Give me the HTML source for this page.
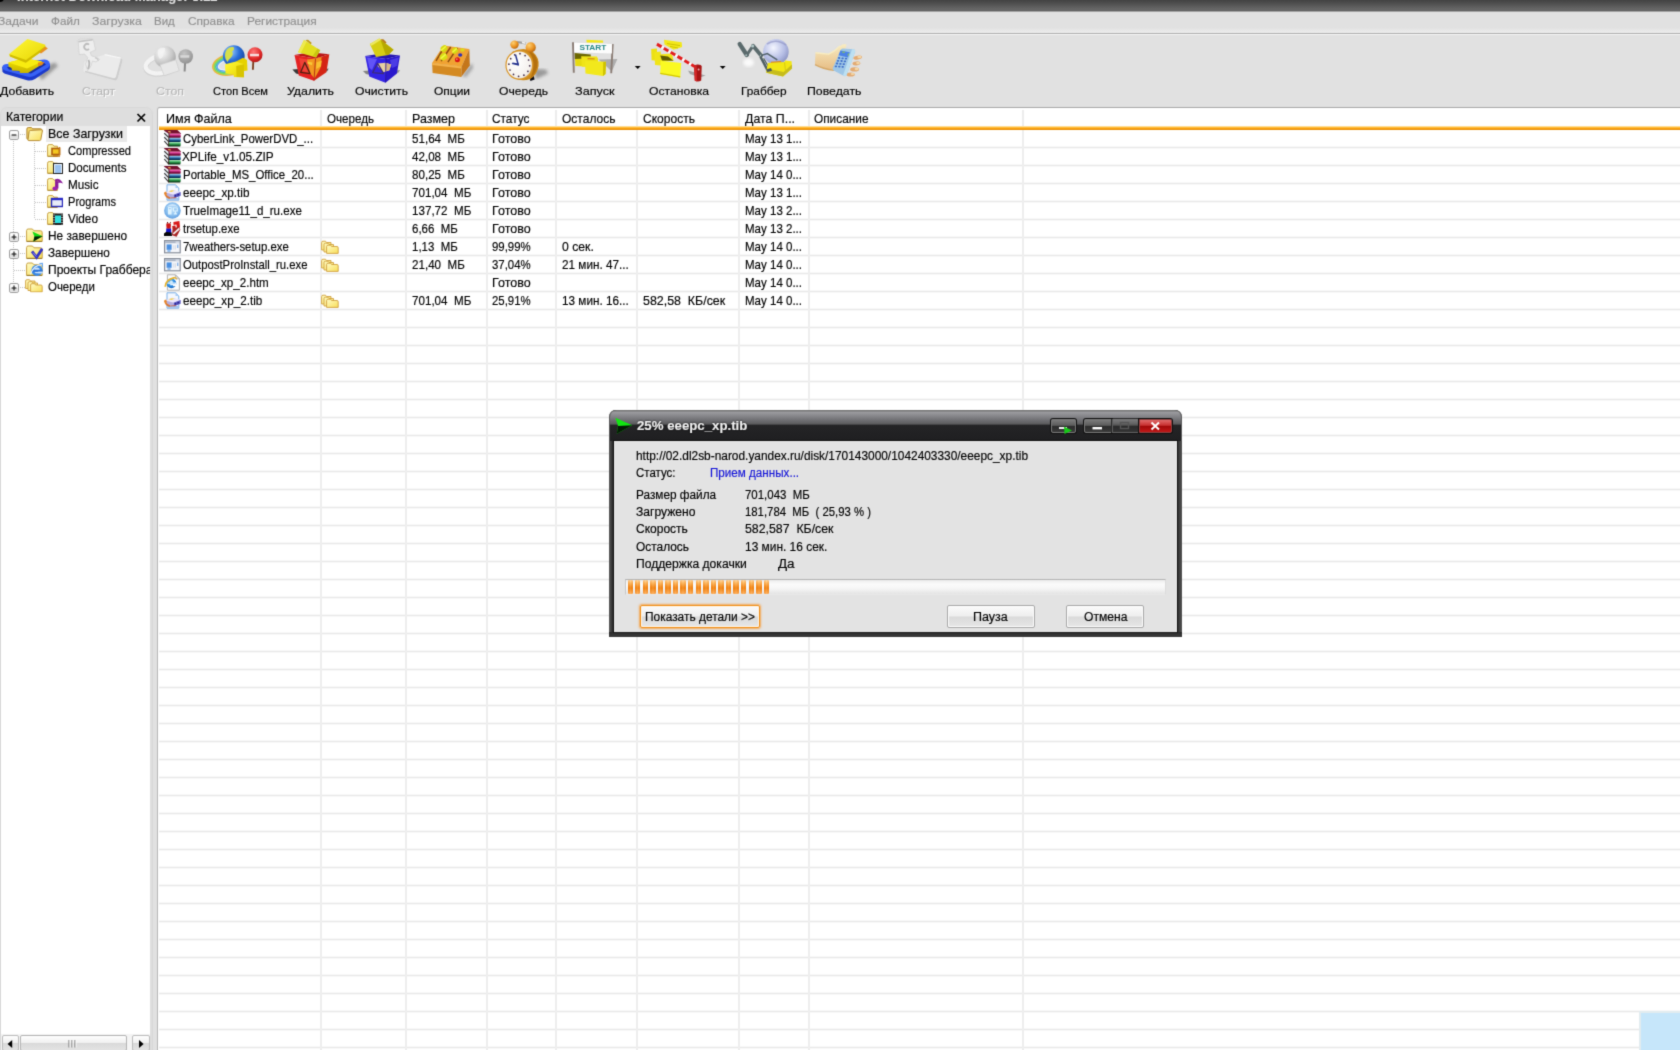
<!DOCTYPE html>
<html lang="ru">
<head>
<meta charset="utf-8">
<title>Internet Download Manager 5.12</title>
<style>
*{box-sizing:border-box;margin:0;padding:0}
html,body{width:1680px;height:1050px;overflow:hidden}
body{position:relative;background:#e1e1e1;font-family:"Liberation Sans",sans-serif;font-size:11px;color:#000;line-height:14px}
.a{position:absolute;white-space:nowrap}
.t{position:absolute;white-space:nowrap;height:14px;line-height:14px;transform-origin:0 0;-webkit-text-stroke:.16px currentColor}
/* title bar */
#tb{left:0;top:0;width:1680px;height:11px;background:linear-gradient(#424242 0,#4e4e4e 30%,#5e5e5e 65%,#686868 88%,#5c5c5c 100%);overflow:hidden;box-shadow:0 1px 0 #a4a4a4}

#tbcorner{left:-4px;top:-6px;width:8px;height:8px;border-radius:50%;background:#000}
#menu span{position:absolute;top:14px;color:#8c8c8c;line-height:14px}
#sep1{left:0;top:28px;width:1680px;height:6px;background:linear-gradient(#e2e2e2 0,#e9e9e9 3px,#eaeaea 4.6px,#b2b2b2 5px,#acacac 6px)}
#sep2{left:0;top:34px;width:1680px;height:1px;background:#f6f6f6}
/* toolbar */
.lbl{position:absolute;top:84px;height:14px;line-height:14px;text-align:center;white-space:nowrap}
.dis{color:#b4b4b4;text-shadow:1px 1px 0 #fff}
/* side */
#side{left:0;top:107px;width:153px;height:950px;background:#dedede;border-radius:7px 7px 0 0;border:1px solid #d8d8d8}
#tree{left:1px;top:126px;width:149px;height:908px;background:#fff}
#list{left:157px;top:107px;width:1530px;height:950px;background:#fff;border:1px solid #b8b8b8;border-top-color:#a8a8a8;border-radius:3px 0 0 0}
</style>
</head>
<body>
<svg width="0" height="0" style="position:absolute"><defs><filter id="soft" x="0" y="0" width="100%" height="100%" color-interpolation-filters="sRGB"><feConvolveMatrix order="3" kernelMatrix="0.0192 0.1001 0.0192 0.1001 0.5228 0.1001 0.0192 0.1001 0.0192" edgeMode="duplicate" preserveAlpha="false"/></filter></defs></svg>
<div id="root" class="a" style="left:0;top:0;width:1680px;height:1050px;overflow:hidden;will-change:transform;filter:url(#soft)">
<div class="a" id="tb"><span class="t" style="left:17.0px;top:-10.0px;font-size:13px;transform:scaleX(1.006);font-weight:bold;color:#dcdcdc;">Internet Download Manager 5.12</span></div>
<div class="a" id="tbcorner"></div>
<span class="t" style="left:-2.0px;top:14.0px;font-size:11.5px;transform:scaleX(1.049);color:#909090;">Задачи</span><span class="t" style="left:51.1px;top:14.0px;font-size:11.5px;transform:scaleX(1.018);color:#909090;">Файл</span><span class="t" style="left:91.9px;top:14.0px;font-size:11.5px;transform:scaleX(1.071);color:#909090;">Загрузка</span><span class="t" style="left:154.1px;top:14.0px;font-size:11.5px;transform:scaleX(0.999);color:#909090;">Вид</span><span class="t" style="left:187.5px;top:14.0px;font-size:11.5px;transform:scaleX(1.033);color:#909090;">Справка</span><span class="t" style="left:246.5px;top:14.0px;font-size:11.5px;transform:scaleX(1.035);color:#909090;">Регистрация</span>
<div class="a" id="sep1"></div><div class="a" id="sep2"></div>
<svg class="a" style="left:0;top:34px" width="900" height="52" viewBox="0 34 900 52">
<defs>
<linearGradient id="gy" x1="0" y1="0" x2="1" y2="1"><stop offset="0" stop-color="#fff838"/><stop offset="1" stop-color="#e6d400"/></linearGradient>
<linearGradient id="gyd" x1="0" y1="0" x2="0" y2="1"><stop offset="0" stop-color="#f4e400"/><stop offset="1" stop-color="#c8b400"/></linearGradient>
<linearGradient id="gblue" x1="0" y1="0" x2="0" y2="1"><stop offset="0" stop-color="#3a62f0"/><stop offset="1" stop-color="#1c36c0"/></linearGradient>
<radialGradient id="gsh"><stop offset="0" stop-color="#555" stop-opacity=".55"/><stop offset="1" stop-color="#888" stop-opacity="0"/></radialGradient>
<radialGradient id="gglobe" cx=".35" cy=".3" r=".8"><stop offset="0" stop-color="#9fd0ff"/><stop offset=".5" stop-color="#2a6fd8"/><stop offset="1" stop-color="#123a90"/></radialGradient>
<radialGradient id="ggray" cx=".35" cy=".3" r=".8"><stop offset="0" stop-color="#fafafa"/><stop offset=".6" stop-color="#c8c8c8"/><stop offset="1" stop-color="#9c9c9c"/></radialGradient>
<radialGradient id="gred" cx=".4" cy=".3" r=".8"><stop offset="0" stop-color="#ff7a7a"/><stop offset=".6" stop-color="#e02828"/><stop offset="1" stop-color="#a01010"/></radialGradient>
<radialGradient id="ggsign" cx=".4" cy=".3" r=".8"><stop offset="0" stop-color="#c4c4c4"/><stop offset="1" stop-color="#8c8c8c"/></radialGradient>
<linearGradient id="gredbin" x1="0" y1="0" x2="1" y2="1"><stop offset="0" stop-color="#ff4a30"/><stop offset=".5" stop-color="#f02818"/><stop offset="1" stop-color="#b00c0c"/></linearGradient>
<linearGradient id="gbluebin" x1="0" y1="0" x2="1" y2="1"><stop offset="0" stop-color="#4a40f0"/><stop offset=".5" stop-color="#3020d8"/><stop offset="1" stop-color="#1a0c98"/></linearGradient>
<radialGradient id="gbell" cx=".35" cy=".3" r=".8"><stop offset="0" stop-color="#ffd070"/><stop offset=".6" stop-color="#e89020"/><stop offset="1" stop-color="#a85808"/></radialGradient>
<radialGradient id="gface" cx=".4" cy=".4" r=".7"><stop offset="0" stop-color="#fff"/><stop offset=".8" stop-color="#f4f0ec"/><stop offset="1" stop-color="#d8c8b8"/></radialGradient>
<radialGradient id="gmesh" cx=".4" cy=".35" r=".75"><stop offset="0" stop-color="#f4f6ff"/><stop offset=".6" stop-color="#b4bce4"/><stop offset="1" stop-color="#8088b8"/></radialGradient>
<linearGradient id="gskin" x1="0" y1="0" x2="0" y2="1"><stop offset="0" stop-color="#f8ecc2"/><stop offset="1" stop-color="#e6bc84"/></linearGradient>
<linearGradient id="gphone" x1="0" y1="0" x2="1" y2="0"><stop offset="0" stop-color="#a8d0f0"/><stop offset="1" stop-color="#6c9cc8"/></linearGradient>
<clipPath id="cl3"><rect x="140" y="40" width="34" height="44"/></clipPath><clipPath id="cl4"><rect x="208" y="40" width="34" height="44"/></clipPath><filter id="b1"><feGaussianBlur stdDeviation="0.5"/></filter>
<filter id="b2"><feGaussianBlur stdDeviation="1.6"/></filter>
</defs>
<!-- 1 add -->
<g>
<path d="M34 70 L55 62.5 L58 66 L42 80 Z" fill="#555" opacity=".5" filter="url(#b2)"/>
<path d="M2.2 67 L2.5 71.5 Q3 73 5 73.8 L27 80.3 Q31 81.2 35 79 L48 70.5 Q50 69 50 67 L50 64 Z" fill="#1c3acc"/>
<path d="M2.2 67 Q2.5 65 5 64.3 L44 59.5 Q47.5 59.3 49 61.5 L50 64 Q50.3 66 48 67.5 L35 75.5 Q31 77.5 27 76.6 L5 70.5 Q2.2 69.5 2.2 67Z" fill="#3862f6"/>
<path d="M7 67 L43 62 L46 64.5 L31 73.5 L9 69.5Z" fill="#182ca0"/>
<path d="M8.3 62.5 L25 58.2 L42 61.5 L42.5 64 L28 73 L20 73 L19.5 71 L12 70.5 L11.5 68 L8.5 66.5Z" fill="url(#gyd)"/>
<path d="M8.3 62.5 L25 58.2 L42 61.5 L27 68.5Z" fill="#f8ec10"/>
<path d="M38 62.6 L44.5 62 L42 65.2 L38 66Z" fill="#e88a18"/>
<path d="M9.2 54 L27.5 39 L45.4 44.8 L45 49 L25.8 62.7 L10 56.5 Z" fill="url(#gy)"/>
<path d="M10 56.5 L25.8 62.7 L45 49 L45.3 46.3 L26 60 L9.4 54.2Z" fill="#d0bc00"/>
<path d="M45.3 46.6 L47.8 48.4 L41 53.6 L39.4 52.6Z" fill="#e89020"/>
</g>
<!-- 2 start (disabled) -->
<g filter="url(#b1)">
<path d="M84.7 61.5 L104.8 54.6 L120.6 58 Q123 58.8 122.4 61 L117.6 78.6 Q116.8 81 114.4 80.2 L85 72.2 Q83 71.4 83.4 69.6Z" fill="#ebebeb"/>
<path d="M120.6 58 Q123 58.8 122.4 61 L117.6 78.6 Q116.8 81 114.4 80.2 L85 72.2 L85.2 70.8 L113.6 78.2 Q115.4 78.6 116 76.8 L120.4 60.4Z" fill="#cdcdcd"/>
<path d="M104.8 54.6 L120.6 58" stroke="#f8f8f8" stroke-width="1.2"/>
<path d="M78.1 40.5 Q78.4 39.2 80 39.2 L91.6 38.9 Q93.2 38.9 93.5 40.4 L95.5 49.9 L90 52.4 L91.6 56 L96 57 L99.6 59.4 L96 62 L92.4 61 L91 66 L87.6 70.6 L85.6 64 L87.8 57.6 L84.6 54 L79.3 54.6Z" fill="#eeeeee" stroke="#cfcfcf" stroke-width=".7"/>
<path d="M78.4 41.6 L92.8 39.8" stroke="#c4c4c4" stroke-width="1.6"/>
<path d="M89 44.6 A2.9 2.9 0 1 0 89 49" fill="none" stroke="#bcbcbc" stroke-width="1.7"/>
<path d="M88.4 60 Q90.4 63.6 88 69" stroke="#b6b6b6" stroke-width="1.8" fill="none"/>
<path d="M95 57.6 Q98 58.4 98.4 60.6" stroke="#c8c8c8" stroke-width="1.2" fill="none"/>
</g>
<!-- 3 stop (disabled) -->
<g filter="url(#b1)">
<g clip-path="url(#cl3)"><ellipse cx="162" cy="65.2" rx="16.6" ry="8.8" fill="none" stroke="#d2d2d2" stroke-width="4.6" transform="rotate(-12 162 65.2)"/>
<ellipse cx="162" cy="64.2" rx="16.6" ry="8.8" fill="none" stroke="#f3f3f3" stroke-width="4.2" transform="rotate(-12 162 64.2)"/></g>
<circle cx="165" cy="56.9" r="10.8" fill="url(#ggray)"/>
<path d="M158 50 q3 -3 7 -2 q1 3 -2 5 q1 4 -3 6 q-3 -3 -2 -9z" fill="#f4f4f4" opacity=".8"/>
<path d="M160 64.8 L175.8 59.8 L179.2 70.7 L164.2 75.7Z" fill="#e8e8e8" stroke="#cccccc" stroke-width=".7"/>
<path d="M185.1 62 L184.6 71.5" stroke="#8a8a8a" stroke-width="2"/>
<circle cx="185.7" cy="56.5" r="7.3" fill="url(#ggsign)"/>
<rect x="180.3" y="55.2" width="9" height="2.5" fill="#d8d8d8"/>
</g>
<!-- 4 stop all -->
<g>
<g clip-path="url(#cl4)"><g transform="rotate(-12 230.8 64.4)" fill="none">
<ellipse cx="230.8" cy="64.4" rx="18.2" ry="10.4" stroke="#f2b43a" stroke-width="1.6"/>
<ellipse cx="230.8" cy="64.4" rx="16.8" ry="9" stroke="#8ed84e" stroke-width="1.7"/>
<ellipse cx="230.8" cy="64.4" rx="15.3" ry="7.6" stroke="#4ec8a0" stroke-width="1.6"/>
<ellipse cx="230.8" cy="64.4" rx="13.9" ry="6.3" stroke="#5aa2f2" stroke-width="1.5"/>
<ellipse cx="230.8" cy="64.4" rx="12.7" ry="5.2" stroke="#eef4f8" stroke-width="1"/>
</g></g>
<circle cx="233.75" cy="56.1" r="10.9" fill="url(#gglobe)"/>
<path d="M226.5 50 q2.5 -3.5 7 -3 q1.5 2.5 -1.5 4.5 q2 3 -1.5 6.5 q-2 1.5 -3 4 q-2.5 -2.5 -2.5 -6 q0 -3.5 1.5 -6z" fill="#d6e04a"/>
<path d="M236 61.5 L243 57.8 L247 60 L247.5 70.5 L240 71.5Z" fill="#e6d200"/>
<path d="M225 64.2 L236 61.5 L243.5 64 L244 77.3 L234 77 L233.5 74.5 L225.5 73.5Z" fill="url(#gy)"/>
<path d="M236.2 66 L244 64.2 L244 77.3 L236.5 77Z" fill="#d8c400"/>
<path d="M253.3 61 L252.9 69.8" stroke="#7a3a1a" stroke-width="1.8"/>
<circle cx="255" cy="54.8" r="7.5" fill="url(#gred)"/>
<rect x="250" y="53.8" width="9" height="2.5" fill="#f6dede"/>
</g>
<!-- 5 delete -->
<g>
<path d="M292.4 69.5 L299 69 L300 74.5 L296 73.5Z" fill="#000" opacity=".75" filter="url(#b1)"/>
<path d="M325.6 69 L328.6 68.6 L327.4 71 L325.6 71.8Z" fill="#000" opacity=".6" filter="url(#b1)"/>
<path d="M294.5 55 L309.8 52.2 L329.3 54.3 L315.5 58.4Z" fill="#b81414"/>
<path d="M294.5 55 L315.5 58.4 L314 80.8 L298.8 75.5Z" fill="#e42222"/>
<path d="M299 58 L313 60.4 L312.4 74 L301.6 70.8Z" fill="#f24a3c" opacity=".8"/>
<path d="M315.5 58.4 L329.3 54.3 L326.4 72.2 L314 80.8Z" fill="#d42414"/>
<path d="M307 59.4 L315.5 58.4 L321.6 57 L320.4 68 L314.6 78.6 L310.4 73.4Z" fill="#f2a020" opacity=".92"/>
<path d="M316.4 62.4 L321.8 60.6 L321 66.4 L316 69Z" fill="#f8c030"/>
<path d="M307.4 61.4 L312.4 62.6 L312 65.2 L307.6 63.8Z" fill="#f8c838"/>
<path d="M315.5 58.6 L314 80.6" stroke="#a81a10" stroke-width=".8"/>
<path d="M300.6 72.4 L304.8 62.4 L310 73.6Z" fill="none" stroke="#4e2210" stroke-width="1.3" stroke-linejoin="round"/>
<path d="M298 52.2 L304 40 L320.2 50.3 L316 57.4 Z" fill="#e2de20"/>
<path d="M298 52.2 L304 40 L306.6 41.8 L300.6 53.2Z" fill="#eeea50"/>
<path d="M313 55.6 L317.6 48.6 L320.2 50.3 L316 57.4Z" fill="#c8c410"/>
<path d="M305.4 40 L308 39.8 L311.8 43 L310.6 44.2Z" fill="#c09a10"/>
</g>
<!-- 6 clean -->
<g>
<path d="M363 71 L369.4 70.6 L370.4 75 L366 74Z" fill="#444" opacity=".6" filter="url(#b1)"/>
<path d="M396.4 70.4 L400 70 L398.6 72.6 L396.4 73.4Z" fill="#444" opacity=".5" filter="url(#b1)"/>
<path d="M365.2 56 L381.7 53.6 L400 55.5 L386 58.9Z" fill="#2414b0"/>
<path d="M365.2 56 L386 58.9 L385.5 82.7 L369.3 76.5Z" fill="#3424e4"/>
<path d="M367 57.6 L377 59 L372 70 L369.4 68Z" fill="#6e60fa" opacity=".8"/>
<path d="M386 58.9 L400 55.5 L396.9 73.6 L385.5 82.7Z" fill="#2a18cc"/>
<path d="M390 60 L398.6 57.6 L397 66 L392 68Z" fill="#5a4cf0" opacity=".7"/>
<path d="M377.4 63.6 L385.5 62.7 L391.2 64.6 L389.3 70.3 L383.6 72.2 L377.9 66.5Z" fill="#e8d2a2"/>
<path d="M385.5 62.7 L391.2 64.6 L389.3 70.3 L385.4 71.4Z" fill="#d8b888"/>
<path d="M372.6 72.6 L377.6 63.4 L383.6 73.6Z" fill="none" stroke="#3c2c78" stroke-width="1.2" stroke-linejoin="round"/>
<path d="M386 59 L385.5 82.4" stroke="#1c0c98" stroke-width=".8"/>
<path d="M369.8 44.1 L379.3 38.4 L393.6 49.8 L388.3 55 L376 57Z" fill="#d6ce14"/>
<path d="M380.4 39.6 L393.6 49.8 L388.3 55 L385.6 54.6Z" fill="#b6aa00"/>
<path d="M369.8 44.1 L379.3 38.4 L381 39.8 L371.6 45.8Z" fill="#ece860"/>
<path d="M380.6 39.2 L383.4 39.2 L386.6 42.4 L385 43.6Z" fill="#b87a18"/>
</g>
<!-- 7 options -->
<g>
<path d="M462 76 L472 63 L473 68 L466 77Z" fill="#555" opacity=".45" filter="url(#b2)"/>
<path d="M432.1 63.1 L443.6 45.5 L469.3 48.9 L461.7 66.5Z" fill="#f0a232"/>
<path d="M432.1 63.1 L461.7 66.5 L461.2 77 L432.6 73.1Z" fill="#d48a22"/>
<path d="M432.1 63.1 L461.7 66.5 L461.6 68.5 L432.2 65Z" fill="#f4b24a"/>
<path d="M461.7 66.5 L469.3 48.9 L469.8 65.5 L461.2 77Z" fill="#c4761a"/>
<path d="M436 60.8 L444 47.4 M441.2 61.2 L450.7 47 M447.9 62.2 L457.4 47.9" stroke="#8a4c0c" stroke-width="1.5"/>
<rect x="440.6" y="45.6" width="6.8" height="6" rx="2.4" fill="#d6da10" transform="rotate(-32 444 48.6)"/>
<rect x="440" y="53.4" width="7.2" height="6.6" rx="2.6" fill="#dade14" transform="rotate(-32 443.6 56.7)"/>
<rect x="451.8" y="47.6" width="6.2" height="5.8" rx="2.3" fill="#d6da10" transform="rotate(-32 455 50.5)"/>
<path d="M441.4 50.2 L445.4 46.8 M441 58.4 L445.4 54.6 M452.8 52 L456.4 48.8" stroke="#f4f848" stroke-width="1.4" stroke-linecap="round"/>
<ellipse cx="462.4" cy="50" rx="2.3" ry="1.8" fill="#dcd81c"/>
<ellipse cx="460.2" cy="55" rx="2.1" ry="1.7" fill="#3232b4"/>
<circle cx="457.4" cy="59.8" r="2.5" fill="#d81414"/><circle cx="456.8" cy="59.2" r=".9" fill="#f87a6a"/>
</g>
<!-- 8 queue (clock) -->
<g>
<path d="M534 69 L546 69.5 L548 73.5 L536 79Z" fill="#444" opacity=".45" filter="url(#b2)"/>
<path d="M529.3 76 L533.4 74.6 L534.6 79.6 L530.4 81Z" fill="#0c0c14"/>
<path d="M517 42 L526 43.4" stroke="#9a9a9a" stroke-width="2.2"/><path d="M522 42.4 L525.6 43.2" stroke="#f4f4f4" stroke-width="1.6"/>
<path d="M512 52 Q524 46 533 52 Q539.5 58 538.6 66 Q537 75 530.2 79 Q522 82 514 78Z" fill="#cc8a1c"/>
<path d="M527 50 Q536 53 537.6 62 Q537.6 72 530.4 78.4 Q534 70 533.4 62 Q532 54 527 50Z" fill="#b4700e"/>
<circle cx="514.5" cy="44.6" r="4.2" fill="url(#gbell)"/>
<circle cx="530.7" cy="47.4" r="5.1" fill="url(#gbell)"/>
<ellipse cx="519.3" cy="65" rx="13.9" ry="14.7" fill="#d8962a"/>
<ellipse cx="519.3" cy="65" rx="12.7" ry="13.6" fill="url(#gface)"/>
<g fill="#3c2440"><circle cx="520.0" cy="53.7" r=".85"/><circle cx="525.1" cy="55.6" r=".85"/><circle cx="528.6" cy="60.0" r=".85"/><circle cx="529.7" cy="65.8" r=".85"/><circle cx="527.9" cy="71.3" r=".85"/><circle cx="523.9" cy="75.2" r=".85"/><circle cx="518.6" cy="76.3" r=".85"/><circle cx="513.5" cy="74.4" r=".85"/><circle cx="510.0" cy="70.0" r=".85"/><circle cx="508.9" cy="64.2" r=".85"/><circle cx="510.7" cy="58.7" r=".85"/><circle cx="514.7" cy="54.8" r=".85"/></g>
<path d="M518.3 65 L515.5 54.6" stroke="#22308c" stroke-width="1.5"/>
<path d="M519 65.8 L511.7 64.1 L512.6 62.4 L518.6 63.6Z" fill="#22308c"/>
</g>
<!-- 9 start queue -->
<g>
<path d="M598.3 59.5 L617.4 58.9 L611.7 71.5 L606 66Z" fill="#666" opacity=".42" filter="url(#b1)"/>
<path d="M586.4 39.8 L603 40.4 L603.2 42.8 L586.6 42.4Z" fill="#f2e618"/>
<path d="M573 42.2 L573.8 72.8" stroke="#8a7c74" stroke-width="1.9"/>
<path d="M612.7 44 L611.2 73.2" stroke="#8a7c74" stroke-width="1.9"/>
<path d="M574 42.7 L612.1 44.1 L611.9 53.6 L574.3 52.2Z" fill="#fcfcfc"/>
<text x="592.9" y="50.3" font-family="Liberation Sans,sans-serif" font-weight="bold" font-size="6.6" fill="#2a8a8a" text-anchor="middle" textLength="27" lengthAdjust="spacingAndGlyphs">START</text>
<path d="M574.6 53 L590.8 54.4 L590.6 59.4 L574.8 59Z" fill="#6c6600"/>
<path d="M575 58.9 L586 58.6 L586.4 66.6 L575.4 66Z" fill="#e6da10"/>
<path d="M581.2 56.2 L597 56.6 L598.3 66.5 L581.8 66.8Z" fill="#f0e418"/>
<path d="M586.9 57.4 L597.9 57.8 L598 61.4 L586.9 61Z" fill="#ece018"/>
<path d="M587.6 58 L594.6 58.3 L594.6 59.5 L587.6 59.2Z" fill="#d88a14"/>
<path d="M585 60.8 L606 61.7 L605.5 74.1 L603 76 L585.5 73.6Z" fill="#f2e81c"/>
<path d="M603.2 62 L606 61.7 L605.5 74.1 L603 76Z" fill="#cec200"/>
</g>
<path d="M634.8 66 L640.6 66 L637.7 69Z" fill="#000"/>
<!-- 10 stop queue -->
<g>
<path d="M688 70.5 L705.5 75.5 L700 77.5 L690 74Z" fill="#666" opacity=".5" filter="url(#b1)"/>
<path d="M664 39.8 L681.7 42.2 L682.1 47 L673.6 49.8 L664.5 44.6Z" fill="#f2e81a"/>
<path d="M667 43.6 L680 45.6 M670 46.4 L678 48" stroke="#c8bc00" stroke-width=".9"/>
<path d="M651.2 49 L656.9 48.6 L657.2 60.8 L651.6 60.2Z" fill="#ece014"/>
<path d="M654.5 52.2 L660.7 51.6 L661 65.5 L655 65Z" fill="#f0e418"/>
<path d="M658 54.6 L672 53.6 L673.6 60.8 L660.4 61.4Z" fill="#f0e418"/>
<path d="M660.2 55.6 L668 56.6 L673.6 60.8 L662 60.4Z" fill="#5e5a00"/>
<path d="M660.7 60.8 L681.2 63.1 L680.2 77.4 L660.2 74.1Z" fill="#fafa22"/>
<path d="M660.2 74.1 L680.2 77.4 L680.3 76.2 L660.3 72.8Z" fill="#d2c600"/>
<path d="M656.9 44.1 L694.5 66.5" stroke="#fafafa" stroke-width="3"/>
<path d="M656.9 44.1 L694.5 66.5" stroke="#e01c1c" stroke-width="3" stroke-dasharray="5.4 2.6"/>
<path d="M694 66 Q694.4 64.4 697.8 64.5 Q701.5 64.8 701.7 66.4 L701.2 80.6 Q698 82.4 694.8 80.8Z" fill="#a81414"/>
<path d="M694 66 L696.6 65 L697 81.4 L694.8 80.8Z" fill="#d42828"/>
<circle cx="698.6" cy="69.4" r="1" fill="#e8b0b0"/>
</g>
<path d="M719.8 66 L725.6 66 L722.7 69Z" fill="#000"/>
<!-- 11 grabber -->
<g>
<ellipse cx="748.6" cy="62.6" rx="5.4" ry="4" fill="#fff" opacity=".85" filter="url(#b2)"/>
<circle cx="775.9" cy="51.7" r="12.8" fill="url(#gmesh)"/>
<path d="M767 44 Q776 38 786 45" fill="none" stroke="#8a90c0" stroke-width="1.6" opacity=".6"/>
<path d="M739.7 44.1 L746.8 55" stroke="#5a6a6c" stroke-width="4.3" stroke-linecap="round"/>
<path d="M746.8 55 L753 45.8" stroke="#5a6a6c" stroke-width="3" stroke-linecap="round"/>
<path d="M753 45.8 L761.1 55.5" stroke="#5a6a6c" stroke-width="3.8" stroke-linecap="round"/>
<circle cx="752.6" cy="46" r="1.5" fill="#b4caca"/><circle cx="746.2" cy="55.2" r="1" fill="#a8bcbc"/><circle cx="761" cy="55.4" r="1" fill="#a8bcbc"/>
<path d="M761.1 55.5 L767.3 53.6 L777.3 59.8" fill="none" stroke="#52626a" stroke-width="1.5"/>
<path d="M760.4 56.6 L767.6 70.4 L771.4 69.4" fill="none" stroke="#4e5e62" stroke-width="2.4" stroke-linejoin="round"/>
<path d="M763.6 58.4 L769.6 68.6" stroke="#4e5e62" stroke-width="1.2"/>
<path d="M771 61.8 L781 61 L781.4 62.6 L771 63.4Z" fill="#e08a18"/>
<path d="M767.8 63.1 L784.6 62 L785 60.6 L791.6 61.2 L792 68.4 L783 76.5 L766.3 72.7Z" fill="#f2e614"/>
<path d="M766.8 68.5 L783.6 72 L792 64.6 L792 68.4 L783 76.5 L766.3 72.7Z" fill="#c6bc1c"/>
<path d="M784.6 62.4 L785.4 70.4" stroke="#d6ca10" stroke-width="1"/>
<path d="M766.4 69.6 L771 68 L772 70.8 L767.2 72Z" fill="#46565a"/>
</g>
<!-- 12 tell a friend -->
<g>
<path d="M815.5 52.7 Q822 53.6 828.8 54.1 Q836 50.5 840 46 Q843.6 42.8 846.6 44.6 L845 50 L840 60 L834 70.4 Q823 69 815 64.6Z" fill="url(#gskin)"/>
<path d="M815.5 52.7 Q822 53.6 828.8 54.1 Q836 50.5 840 46" fill="none" stroke="#f8ecc0" stroke-width="1.4"/>
<path d="M815 64.6 Q823 69 834 70.4" fill="none" stroke="#d4a868" stroke-width="1.2"/>
<g fill="#e2aa72"><ellipse cx="857.6" cy="57.6" rx="4.4" ry="2" transform="rotate(-10 857.6 57.6)"/><ellipse cx="856.4" cy="63.4" rx="4" ry="2" transform="rotate(-6 856.4 63.4)"/><ellipse cx="854.6" cy="69.4" rx="4.4" ry="2.1"/><ellipse cx="850.6" cy="74.4" rx="4.2" ry="2"/></g>
<g fill="#f4d6a4"><ellipse cx="859.4" cy="57" rx="2" ry="1.2"/><ellipse cx="858" cy="63" rx="1.8" ry="1.2"/><ellipse cx="856.6" cy="69" rx="2" ry="1.2"/><ellipse cx="852.6" cy="74" rx="1.9" ry="1.1"/></g>
<path d="M840.7 50 Q841.2 48.4 843 48.5 L853.6 49.2 Q855.6 49.6 855.2 51.6 L846.6 75 Q845.6 76.8 843.6 75.8 L833.6 70.6 Q832 69.6 832.8 67.8Z" fill="#9ec6e6"/>
<path d="M852 49.2 L853.6 49.2 Q855.6 49.6 855.2 51.6 L846.6 75 Q845.6 76.8 843.6 75.8 L843 75.4Z" fill="#bce0f2"/>
<path d="M840.4 50.6 L849.8 52.2 L847.9 57.4 L838.6 55.2Z" fill="#4c82e6"/>
<path d="M842.4 51.4 L845 51.8 L844.6 53 L842 52.6Z M848 53.4 L849.2 53.6 L848.6 55.6 L847.4 55.4Z" fill="#86c45a"/>
<g fill="#3c6cc8"><ellipse cx="839.1" cy="58.0" rx="1.2" ry=".9" transform="rotate(8 839.1 58.0)"/><ellipse cx="842.6" cy="58.3" rx="1.2" ry=".9" transform="rotate(8 842.6 58.3)"/><ellipse cx="846.0" cy="58.6" rx="1.2" ry=".9" transform="rotate(8 846.0 58.6)"/><ellipse cx="838.0" cy="60.8" rx="1.2" ry=".9" transform="rotate(8 838.0 60.8)"/><ellipse cx="841.5" cy="61.0" rx="1.2" ry=".9" transform="rotate(8 841.5 61.0)"/><ellipse cx="844.9" cy="61.3" rx="1.2" ry=".9" transform="rotate(8 844.9 61.3)"/><ellipse cx="837.0" cy="63.5" rx="1.2" ry=".9" transform="rotate(8 837.0 63.5)"/><ellipse cx="840.4" cy="63.8" rx="1.2" ry=".9" transform="rotate(8 840.4 63.8)"/><ellipse cx="843.8" cy="64.1" rx="1.2" ry=".9" transform="rotate(8 843.8 64.1)"/><ellipse cx="835.9" cy="66.3" rx="1.2" ry=".9" transform="rotate(8 835.9 66.3)"/><ellipse cx="839.3" cy="66.6" rx="1.2" ry=".9" transform="rotate(8 839.3 66.6)"/><ellipse cx="842.7" cy="66.8" rx="1.2" ry=".9" transform="rotate(8 842.7 66.8)"/></g>
</g>
</svg>
<span class="t" style="left:-0.5px;top:84.0px;font-size:11.6px;transform:scaleX(1.054);">Добавить</span><span class="t" style="left:81.5px;top:84.0px;font-size:11.6px;transform:scaleX(1.047);color:#b6b6b6;text-shadow:1px 1px 0 #fff;">Старт</span><span class="t" style="left:155.5px;top:84.0px;font-size:11.6px;transform:scaleX(1.065);color:#b6b6b6;text-shadow:1px 1px 0 #fff;">Стоп</span><span class="t" style="left:212.5px;top:84.0px;font-size:11.6px;transform:scaleX(0.957);">Стоп Всем</span><span class="t" style="left:287.0px;top:84.0px;font-size:11.6px;transform:scaleX(1.062);">Удалить</span><span class="t" style="left:355.0px;top:84.0px;font-size:11.6px;transform:scaleX(1.050);">Очистить</span><span class="t" style="left:434.0px;top:84.0px;font-size:11.6px;transform:scaleX(1.032);">Опции</span><span class="t" style="left:498.5px;top:84.0px;font-size:11.6px;transform:scaleX(1.044);">Очередь</span><span class="t" style="left:574.5px;top:84.0px;font-size:11.6px;transform:scaleX(1.089);">Запуск</span><span class="t" style="left:649.0px;top:84.0px;font-size:11.6px;transform:scaleX(1.048);">Остановка</span><span class="t" style="left:741.0px;top:84.0px;font-size:11.6px;transform:scaleX(1.021);">Граббер</span><span class="t" style="left:807.0px;top:84.0px;font-size:11.6px;transform:scaleX(1.062);">Поведать</span>
<div class="a" id="side"></div>
<div class="a" id="tree"></div>
<span class="t" style="left:6.2px;top:110.4px;font-size:12.8px;transform:scaleX(0.954);">Категории</span><svg class="a" style="left:136px;top:112px" width="11" height="11" viewBox="0 0 11 11"><path d="M1.5 2 L9 9.5 M9 2 L1.5 9.5" stroke="#000" stroke-width="1.7"/></svg><div class="a" style="left:46px;top:126px;width:81px;height:16px;background:#e9e9e9"></div><svg class="a" style="left:0;top:126px" width="150" height="175" viewBox="0 126 150 175" shape-rendering="crispEdges"><g stroke="#c2c2c2" stroke-width="1" stroke-dasharray="1 1" fill="none"><path d="M13.5 139 V287"/><path d="M34.5 143 V219"/><path d="M35 151.5 H46"/><path d="M35 168.5 H46"/><path d="M35 185.5 H46"/><path d="M35 202.5 H46"/><path d="M35 219.5 H46"/><path d="M14 134.5 H26"/><path d="M14 236.5 H26"/><path d="M14 253.5 H26"/><path d="M14 270.5 H26"/><path d="M14 287.5 H26"/></g></svg><svg class="a" style="left:9px;top:130px" width="10" height="10" viewBox="0 0 10 10"><rect x=".5" y=".5" width="9" height="9" rx="1.6" fill="#fcfcfc" stroke="#9c9c9c"/><rect x="1.4" y="5" width="7.2" height="3.6" fill="#dedede"/><path d="M2.6 5 H7.4" stroke="#222" stroke-width="1.2"/></svg><svg class="a" style="left:9px;top:231.5px" width="10" height="10" viewBox="0 0 10 10"><rect x=".5" y=".5" width="9" height="9" rx="1.6" fill="#fcfcfc" stroke="#9c9c9c"/><rect x="1.4" y="5" width="7.2" height="3.6" fill="#dedede"/><path d="M2.6 5 H7.4" stroke="#222" stroke-width="1.2"/><path d="M5 2.6 V7.4" stroke="#222" stroke-width="1.2"/></svg><svg class="a" style="left:9px;top:248.5px" width="10" height="10" viewBox="0 0 10 10"><rect x=".5" y=".5" width="9" height="9" rx="1.6" fill="#fcfcfc" stroke="#9c9c9c"/><rect x="1.4" y="5" width="7.2" height="3.6" fill="#dedede"/><path d="M2.6 5 H7.4" stroke="#222" stroke-width="1.2"/><path d="M5 2.6 V7.4" stroke="#222" stroke-width="1.2"/></svg><svg class="a" style="left:9px;top:282.5px" width="10" height="10" viewBox="0 0 10 10"><rect x=".5" y=".5" width="9" height="9" rx="1.6" fill="#fcfcfc" stroke="#9c9c9c"/><rect x="1.4" y="5" width="7.2" height="3.6" fill="#dedede"/><path d="M2.6 5 H7.4" stroke="#222" stroke-width="1.2"/><path d="M5 2.6 V7.4" stroke="#222" stroke-width="1.2"/></svg><svg width="0" height="0" style="position:absolute"><defs>
<linearGradient id="fy" x1="0" y1="0" x2="1" y2="1"><stop offset="0" stop-color="#fffcc8"/><stop offset="1" stop-color="#f8de58"/></linearGradient>
<symbol id="fold" viewBox="0 0 16 16"><path d="M.6 4.2 Q.6 2.6 2.2 2.6 H5.6 L7 4.2 H10.4 V14.2 H.6Z" fill="url(#fy)" stroke="#c8a040" stroke-width="1"/><path d="M.6 14.4 H10.4" stroke="#a88430" stroke-width=".8"/></symbol>
<symbol id="foldw" viewBox="0 0 17 16"><path d="M.6 3.6 Q.6 2 2.2 2 H6.4 L8 3.8 H14.6 Q16.2 3.8 16.2 5.4 V14.2 H.6Z" fill="url(#fy)" stroke="#c8a040" stroke-width="1"/><path d="M.6 14.5 H16.2" stroke="#9c7c2c" stroke-width="1"/></symbol>
<symbol id="foldbig" viewBox="0 0 17 16"><path d="M.9 3 Q.9 1.6 2.2 1.6 H5.4 L6.8 2.8 H14.6 Q15.8 2.8 15.8 4 V6 H3.4 L2 13.6 L.9 12.4Z" fill="#f4d868" stroke="#b08430" stroke-width="1"/><path d="M3.2 5.4 Q3.4 4.4 4.6 4.4 L16 3.8 Q16.6 3.8 16.4 4.8 L14.8 13.6 Q14.6 14.6 13.4 14.6 H3 Q1.8 14.6 2 13.6Z" fill="url(#fy)" stroke="#b88c34" stroke-width="1"/></symbol>
<symbol id="qfold" viewBox="0 0 18 14"><g fill="url(#fy)" stroke="#d0a040" stroke-width=".9"><path d="M.6 2.5 Q.6 1.2 2 1.2 H4.5 L5.5 2.5 H10 V10 H.6Z"/><path d="M3 4.5 Q3 3.2 4.4 3.2 H7 L8 4.5 H12.5 V12 H3Z"/><path d="M5.6 6.5 Q5.6 5.2 7 5.2 H9.6 L10.6 6.5 H16 Q17.2 6.5 17.2 7.8 V13.4 H5.6Z"/></g></symbol>
</defs></svg><svg class="a" style="left:26px;top:126px" width="17" height="16"><use href="#foldbig"/></svg><svg class="a" style="left:47px;top:142px" width="16" height="16" viewBox="0 0 16 16"><use href="#fold"/><rect x="5" y="6.5" width="7.5" height="6" fill="#f4c820" stroke="#b06010" stroke-width="1.6"/><path d="M12.5 5 V13 M6 14 H13" stroke="#c07818" stroke-width="1.4"/></svg><svg class="a" style="left:47px;top:159px" width="16" height="16" viewBox="0 0 16 16"><use href="#fold"/><rect x="6.5" y="4.5" width="9" height="10" fill="#eaf4ff" stroke="#222" stroke-width="1"/><path d="M8 7 H14 M8 9 H14 M8 11 H14 M8 13 H14" stroke="#4a90e0" stroke-width="1"/></svg><svg class="a" style="left:47px;top:176px" width="16" height="16" viewBox="0 0 16 16"><use href="#fold"/><path d="M9 12 V4 Q12 3 14 6 Q12 5.5 10.5 6 V12.5" fill="none" stroke="#8a1a9a" stroke-width="1.8"/><ellipse cx="8" cy="12.5" rx="2.6" ry="2" fill="#a020b0"/></svg><svg class="a" style="left:47px;top:193px" width="16" height="16" viewBox="0 0 16 16"><use href="#fold"/><rect x="4.5" y="5.5" width="11" height="8" fill="#e8ecf8" stroke="#2828b8" stroke-width="1.4"/><rect x="4.5" y="5" width="11" height="2.2" fill="#2828c8"/></svg><svg class="a" style="left:47px;top:210px" width="16" height="16" viewBox="0 0 16 16"><use href="#fold"/><rect x="6" y="3.5" width="10" height="11.5" fill="#222"/><rect x="8" y="5.5" width="6" height="7.5" fill="#30e0e0"/><path d="M7 4.5 V15 M15 4.5 V15" stroke="#fff" stroke-width="1" stroke-dasharray="1 1.5"/></svg><svg class="a" style="left:26px;top:227px" width="17" height="16" viewBox="0 0 17 16"><use href="#foldw" width="17" height="16"/><path d="M6.4 4.4 L16.6 9.2 L7.4 14.4 L8.4 9.4Z" fill="#14dc14"/><path d="M8.4 9.6 L16.6 9.2 L7.4 14.6Z" fill="#052005"/></svg><svg class="a" style="left:26px;top:244px" width="17" height="16" viewBox="0 0 17 16"><use href="#foldw" width="17" height="16"/><path d="M6 7.4 L10.6 13.4 L16.2 4.8" fill="none" stroke="#3434c4" stroke-width="2.8"/><path d="M7 8.6 L10.4 12.6" stroke="#8a8ae8" stroke-width="1"/></svg><svg class="a" style="left:26px;top:261px" width="17" height="16" viewBox="0 0 17 16"><use href="#foldw" width="17" height="16"/><circle cx="11" cy="9.4" r="5.6" fill="#3a88e4"/><circle cx="11" cy="9.4" r="2.8" fill="#cfe4fa"/><path d="M5.6 9.8 H16.4" stroke="#2a72d8" stroke-width="2.2"/><rect x="12.2" y="10.6" width="4.6" height="1.8" fill="#cfe4fa"/><path d="M4.4 13.4 Q8 3.4 16.6 3.6" fill="none" stroke="#e8f2ff" stroke-width="1.2"/><path d="M13.4 2.6 L16.8 2.4 L16.6 6" fill="none" stroke="#6aa8ee" stroke-width="1.4"/></svg><svg class="a" style="left:24.6px;top:278.4px" width="18" height="15" viewBox="0 0 18 14"><use href="#qfold"/></svg><span class="t" style="left:47.5px;top:126.7px;font-size:12.4px;transform:scaleX(1.004);">Все Загрузки</span><span class="t" style="left:68.0px;top:143.7px;font-size:12.4px;transform:scaleX(0.897);">Compressed</span><span class="t" style="left:68.0px;top:160.7px;font-size:12.4px;transform:scaleX(0.933);">Documents</span><span class="t" style="left:68.0px;top:177.7px;font-size:12.4px;transform:scaleX(0.943);">Music</span><span class="t" style="left:68.0px;top:194.7px;font-size:12.4px;transform:scaleX(0.894);">Programs</span><span class="t" style="left:67.5px;top:211.7px;font-size:12.4px;transform:scaleX(0.953);">Video</span><span class="t" style="left:47.5px;top:228.7px;font-size:12.4px;transform:scaleX(0.956);">Не завершено</span><span class="t" style="left:47.5px;top:245.7px;font-size:12.4px;transform:scaleX(0.948);">Завершено</span><div class="a" style="left:0;top:262px;width:150px;height:16px;overflow:hidden"><span class="t" style="left:47.5px;top:0.7px;font-size:12.4px;transform:scaleX(0.970);">Проекты Граббера</span></div><span class="t" style="left:47.5px;top:279.7px;font-size:12.4px;transform:scaleX(0.924);">Очереди</span><div class="a" style="left:1px;top:1034px;width:149px;height:16px;background:#f4f4f4"></div>
<div class="a" style="left:2px;top:1035px;width:17px;height:16px;background:linear-gradient(#fefefe 0,#f1f1f1 46%,#d9d9d9 52%,#e3e3e3 100%);border:1px solid #bcbcbc;border-radius:2px"></div>
<div class="a" style="left:20px;top:1035px;width:107px;height:16px;background:linear-gradient(#fefefe 0,#f1f1f1 46%,#d9d9d9 52%,#e3e3e3 100%);border:1px solid #b4b4b4;border-radius:2px"></div>
<div class="a" style="left:132px;top:1035px;width:18px;height:16px;background:linear-gradient(#fefefe 0,#f1f1f1 46%,#d9d9d9 52%,#e3e3e3 100%);border:1px solid #bcbcbc;border-radius:2px"></div>
<svg class="a" style="left:0;top:1035px" width="150" height="15" viewBox="0 1035 150 15"><path d="M7.6 1044 L12.2 1040 V1048Z M143.6 1044 L139 1040 V1048Z" fill="#000"/><path d="M69 1040 V1047.5 M72 1040 V1047.5 M75 1040 V1047.5" stroke="#777" stroke-width="1.1"/><path d="M70 1040 V1047.5 M73 1040 V1047.5 M76 1040 V1047.5" stroke="#fff" stroke-width=".9"/></svg>
<div class="a" id="list"></div>
<div class="a" style="left:159px;top:146px;width:1521px;height:904px;background:repeating-linear-gradient(to bottom,#f8f8f8 0,#f8f8f8 1px,#e9e9e9 1px,#e9e9e9 2px,#f8f8f8 2px,#f8f8f8 3px,transparent 3px,transparent 18px)"></div><div class="a" style="left:320px;top:130px;width:2px;height:920px;background:#eeeeee"></div><div class="a" style="left:320px;top:110px;width:2px;height:17px;background:#ececec"></div><div class="a" style="left:405px;top:130px;width:2px;height:920px;background:#eeeeee"></div><div class="a" style="left:405px;top:110px;width:2px;height:17px;background:#ececec"></div><div class="a" style="left:486px;top:130px;width:2px;height:920px;background:#eeeeee"></div><div class="a" style="left:486px;top:110px;width:2px;height:17px;background:#ececec"></div><div class="a" style="left:555px;top:130px;width:2px;height:920px;background:#eeeeee"></div><div class="a" style="left:555px;top:110px;width:2px;height:17px;background:#ececec"></div><div class="a" style="left:636px;top:130px;width:2px;height:920px;background:#eeeeee"></div><div class="a" style="left:636px;top:110px;width:2px;height:17px;background:#ececec"></div><div class="a" style="left:738px;top:130px;width:2px;height:920px;background:#eeeeee"></div><div class="a" style="left:738px;top:110px;width:2px;height:17px;background:#ececec"></div><div class="a" style="left:808px;top:130px;width:2px;height:920px;background:#eeeeee"></div><div class="a" style="left:808px;top:110px;width:2px;height:17px;background:#ececec"></div><div class="a" style="left:1022px;top:130px;width:2px;height:920px;background:#eeeeee"></div><div class="a" style="left:1022px;top:110px;width:2px;height:17px;background:#ececec"></div><div class="a" style="left:159px;top:126px;width:1521px;height:4px;background:linear-gradient(#fff0d2 0,#ffc850 1.1px,#ffab1a 2px,#f29608 3.1px,#e68e0a 3.6px,#f6d2a0 4px)"></div><span class="t" style="left:166.1px;top:112.1px;font-size:12.6px;transform:scaleX(0.998);">Имя Файла</span><span class="t" style="left:326.5px;top:112.1px;font-size:12.6px;transform:scaleX(0.921);">Очередь</span><span class="t" style="left:411.5px;top:112.1px;font-size:12.6px;transform:scaleX(0.993);">Размер</span><span class="t" style="left:492.0px;top:112.1px;font-size:12.6px;transform:scaleX(0.942);">Статус</span><span class="t" style="left:562.0px;top:112.1px;font-size:12.6px;transform:scaleX(0.954);">Осталось</span><span class="t" style="left:642.5px;top:112.1px;font-size:12.6px;transform:scaleX(0.956);">Скорость</span><span class="t" style="left:744.5px;top:112.1px;font-size:12.6px;transform:scaleX(0.982);">Дата П...</span><span class="t" style="left:814.0px;top:112.1px;font-size:12.6px;transform:scaleX(0.940);">Описание</span><svg width="0" height="0" style="position:absolute"><defs>
<symbol id="rar" viewBox="0 0 17 17"><defs><linearGradient id="rp" x1="0" y1="0" x2="0" y2="1"><stop offset="0" stop-color="#f6a0c8"/><stop offset=".25" stop-color="#e855a8"/><stop offset=".65" stop-color="#8a0a48"/><stop offset="1" stop-color="#4a0424"/></linearGradient><linearGradient id="rb" x1="0" y1="0" x2="0" y2="1"><stop offset="0" stop-color="#a8d4f0"/><stop offset=".3" stop-color="#5a98cc"/><stop offset=".7" stop-color="#0c4278"/><stop offset="1" stop-color="#04203c"/></linearGradient><linearGradient id="rg" x1="0" y1="0" x2="0" y2="1"><stop offset="0" stop-color="#b8f0c0"/><stop offset=".3" stop-color="#58c078"/><stop offset=".7" stop-color="#0e6a28"/><stop offset="1" stop-color="#021c08"/></linearGradient></defs>
<path d="M.3 .4 L5 3.6 L4.6 16.2 L.3 11.4Z" fill="#f2f6fc"/>
<path d="M.3 3.2 L4.6 7.4 M.3 7.2 L4.6 11.6 M.3 11 L4.6 15.8" stroke="#333" stroke-width="1.1"/>
<path d="M.2 0 L13.4 0 L16.8 3.2 L16.8 4 L5 4 L.2 .8Z" fill="#74102e"/>
<path d="M3.6 1 L6.2 1 L7.2 2.4 L4.8 2.6Z" fill="#e09a48"/>
<path d="M5 3.6 L16.2 3.4 Q17.2 5.5 16.4 7.8 L5 7.8Z" fill="url(#rp)"/>
<path d="M5 7.9 L16.4 7.9 Q17.2 10 16.4 12 L5 12Z" fill="url(#rb)"/>
<path d="M5 12.1 L16.4 12.1 Q17.2 14.2 16.2 16.4 L4.4 16.4Z" fill="url(#rg)"/>
<path d="M5 3.6 L4.6 16.3" stroke="#2a1208" stroke-width=".9"/></symbol>
<symbol id="tib" viewBox="0 0 17 17"><path d="M3 .8 H11.5 L14.8 4 V16.2 H3Z" fill="#f4f8ff" stroke="#7aaee6" stroke-width="1"/><path d="M11.5 .8 V4 H14.8Z" fill="#a8ccf4"/><path d="M3.5 14 H14.4 V15.8 H3.5Z" fill="#9cc0ec"/>
<path d="M1.2 8.6 L8 5.8 L16.6 8 L16.6 11.8 L9.6 14.6 L1.2 12Z" fill="#d4cef2"/><path d="M1.2 8.6 L9.6 10.8 L16.6 8 L8 5.8Z" fill="#ece8fc"/><path d="M9.6 10.8 V14.6 L16.6 11.8 V8Z" fill="#5c5ac4"/><path d="M1.2 8.6 L9.6 10.8 V14.6 L1.2 12Z" fill="#b4aee0"/><path d="M10.8 12.2 L12.2 11.7 M13.4 11.2 L15 10.5" stroke="#1c1a80" stroke-width="1.3"/><path d="M4.6 7.2 L8 6.2 L10.6 6.8 L7.4 8Z" fill="#f2d24a"/>
<path d="M.9 8.4 Q1.4 13 6 14.2" fill="none" stroke="#e8862a" stroke-width="1.9"/><path d="M0 9.4 L2 7.2 L3 10Z" fill="#e8862a"/><path d="M2 12.6 Q6 14.8 12 13.6" fill="none" stroke="#c86a4a" stroke-width=".9"/></symbol>
<symbol id="ti" viewBox="0 0 17 17"><defs><radialGradient id="tig" cx=".5" cy=".42" r=".6"><stop offset="0" stop-color="#bfe0fa"/><stop offset=".6" stop-color="#8ec2f0"/><stop offset="1" stop-color="#5a9ade"/></radialGradient></defs><circle cx="8.4" cy="8.5" r="8.3" fill="url(#tig)"/><path d="M2.2 5.4 Q8.4 -1.4 14.6 5.4 Q8.4 2.6 2.2 5.4Z" fill="#d8ecfc" opacity=".8"/><rect x="4" y="5" width="3.6" height="7.4" rx=".5" fill="#dff4ff"/><rect x="4.9" y="6.2" width="1.8" height="1" fill="#8ec2f0"/><rect x="9" y="5.4" width="4.8" height="4.2" rx=".5" fill="#dff4ff"/><rect x="10" y="6.3" width="2.8" height="2.2" fill="#9ccaf2"/><path d="M11.4 9.6 V11.4 M9.8 11.9 H13" stroke="#dff4ff" stroke-width="1.3"/></symbol>
<symbol id="trs" viewBox="0 0 17 17"><path d="M1.8 14 L2.4 8.2 L7 8.2 L7.4 14Z" fill="#1414c8"/><path d="M2.2 4.4 L3.4 3.2 L6 3.4 L7 4.6 L6.6 8.4 L2.6 8.4Z" fill="#d01414"/><path d="M3 3.6 L3.8 2 M6 3.6 L6.6 2.2" stroke="#600" stroke-width="1"/><path d="M0 13.4 L2 12 L7.6 12.4 L8 16 L0 16Z" fill="#050505"/>
<path d="M9.4 2 L15.4 1 L16 7.4 L13 8 L12.4 4.6 L9.6 5Z" fill="#d81818"/><path d="M8.6 8.6 L14.6 6.8 L16.4 9.6 L12.6 16.8 L8 15.2Z" fill="#a82424"/><path d="M8.6 13.4 L14.8 7.8 L15.8 9.4 L10 14.4Z" fill="#f4f0f0"/><path d="M8.2 6 L11.4 5.4 L11.8 8.4 L8.6 9Z" fill="#c01818"/></symbol>
<symbol id="win" viewBox="0 0 17 17"><rect x=".6" y="2.6" width="15.6" height="12.2" fill="#f4f6fa" stroke="#868c98" stroke-width="1.2"/><rect x="1.2" y="3.2" width="14.4" height="2" fill="#aab4c4"/><rect x="11.6" y="3.5" width="3.4" height="1.3" fill="#dfe5ee"/><rect x="2.6" y="6.4" width="5" height="5.4" fill="#4a90e2"/><path d="M3.4 13 H6.6" stroke="#4a90e2" stroke-width="1.1"/><path d="M9.8 7.2 V11.6 M11.4 7.2 V11.6" stroke="#d8dce4" stroke-width="1"/><rect x="13" y="6.6" width="1.4" height="3.4" fill="#8ab4e8"/></symbol>
<symbol id="htm" viewBox="0 0 17 17"><defs><radialGradient id="ieg" cx=".4" cy=".35" r=".7"><stop offset="0" stop-color="#7cc8f8"/><stop offset=".6" stop-color="#2a8ae2"/><stop offset="1" stop-color="#1460b8"/></radialGradient></defs><path d="M3.4 .8 H11.4 L15.4 4.8 V16.2 H3.4Z" fill="#fcfcfc" stroke="#a8a8a8" stroke-width=".9"/><path d="M11.4 .8 V4.8 H15.4Z" fill="#dcdcdc" stroke="#a8a8a8" stroke-width=".7"/>
<circle cx="7.4" cy="9.4" r="4.9" fill="url(#ieg)"/><path d="M3.4 9.2 H11.8 V10.6 H6.2" stroke="#e8f4ff" stroke-width="1.3" fill="none"/><circle cx="7.4" cy="8" r="1.5" fill="#d4ecfc"/><rect x="9" y="10.8" width="3.6" height="1.4" fill="#fcfcfc"/>
<path d="M1.2 12.8 Q1.4 5.6 10.4 3.6" fill="none" stroke="#e8b22a" stroke-width="1.7"/><path d="M10 3.7 Q12.6 3.6 12.4 5.4" fill="none" stroke="#e8b22a" stroke-width="1.2"/></symbol>
</defs></svg><svg class="a" style="left:164px;top:130px" width="17" height="17"><use href="#rar"/></svg><span class="t" style="left:183.0px;top:132.1px;font-size:12.6px;transform:scaleX(0.907);">CyberLink_PowerDVD_...</span><span style="white-space:pre"><span class="t" style="left:411.7px;top:132.1px;font-size:12.6px;transform:scaleX(0.922);white-space:pre;">51,64  МБ</span></span><span class="t" style="left:492.1px;top:132.1px;font-size:12.6px;transform:scaleX(0.995);">Готово</span><span class="t" style="left:744.5px;top:132.1px;font-size:12.6px;transform:scaleX(0.915);">May 13 1...</span><svg class="a" style="left:164px;top:148px" width="17" height="17"><use href="#rar"/></svg><span class="t" style="left:182.1px;top:150.1px;font-size:12.6px;transform:scaleX(0.936);">XPLife_v1.05.ZIP</span><span style="white-space:pre"><span class="t" style="left:411.7px;top:150.1px;font-size:12.6px;transform:scaleX(0.922);white-space:pre;">42,08  МБ</span></span><span class="t" style="left:492.1px;top:150.1px;font-size:12.6px;transform:scaleX(0.995);">Готово</span><span class="t" style="left:744.5px;top:150.1px;font-size:12.6px;transform:scaleX(0.915);">May 13 1...</span><svg class="a" style="left:164px;top:166px" width="17" height="17"><use href="#rar"/></svg><span class="t" style="left:183.0px;top:168.1px;font-size:12.6px;transform:scaleX(0.908);">Portable_MS_Office_20...</span><span style="white-space:pre"><span class="t" style="left:411.7px;top:168.1px;font-size:12.6px;transform:scaleX(0.922);white-space:pre;">80,25  МБ</span></span><span class="t" style="left:492.1px;top:168.1px;font-size:12.6px;transform:scaleX(0.995);">Готово</span><span class="t" style="left:744.5px;top:168.1px;font-size:12.6px;transform:scaleX(0.915);">May 14 0...</span><svg class="a" style="left:164px;top:184px" width="17" height="17"><use href="#tib"/></svg><span class="t" style="left:183.0px;top:186.1px;font-size:12.6px;transform:scaleX(0.931);">eeepc_xp.tib</span><span style="white-space:pre"><span class="t" style="left:411.7px;top:186.1px;font-size:12.6px;transform:scaleX(0.923);white-space:pre;">701,04  МБ</span></span><span class="t" style="left:492.1px;top:186.1px;font-size:12.6px;transform:scaleX(0.995);">Готово</span><span class="t" style="left:744.5px;top:186.1px;font-size:12.6px;transform:scaleX(0.915);">May 13 1...</span><svg class="a" style="left:164px;top:202px" width="17" height="17"><use href="#ti"/></svg><span class="t" style="left:183.0px;top:204.1px;font-size:12.6px;transform:scaleX(0.918);">TrueImage11_d_ru.exe</span><span style="white-space:pre"><span class="t" style="left:411.7px;top:204.1px;font-size:12.6px;transform:scaleX(0.923);white-space:pre;">137,72  МБ</span></span><span class="t" style="left:492.1px;top:204.1px;font-size:12.6px;transform:scaleX(0.995);">Готово</span><span class="t" style="left:744.5px;top:204.1px;font-size:12.6px;transform:scaleX(0.915);">May 13 2...</span><svg class="a" style="left:164px;top:220px" width="17" height="17"><use href="#trs"/></svg><span class="t" style="left:183.0px;top:222.1px;font-size:12.6px;transform:scaleX(0.907);">trsetup.exe</span><span style="white-space:pre"><span class="t" style="left:411.7px;top:222.1px;font-size:12.6px;transform:scaleX(0.911);white-space:pre;">6,66  МБ</span></span><span class="t" style="left:492.1px;top:222.1px;font-size:12.6px;transform:scaleX(0.995);">Готово</span><span class="t" style="left:744.5px;top:222.1px;font-size:12.6px;transform:scaleX(0.915);">May 13 2...</span><svg class="a" style="left:164px;top:238px" width="17" height="17"><use href="#win"/></svg><span class="t" style="left:183.0px;top:240.1px;font-size:12.6px;transform:scaleX(0.905);">7weathers-setup.exe</span><svg class="a" style="left:321px;top:239.5px" width="18" height="14" viewBox="0 0 18 14"><use href="#qfold"/></svg><span style="white-space:pre"><span class="t" style="left:411.7px;top:240.1px;font-size:12.6px;transform:scaleX(0.911);white-space:pre;">1,13  МБ</span></span><span class="t" style="left:492.1px;top:240.1px;font-size:12.6px;transform:scaleX(0.906);">99,99%</span><span class="t" style="left:562.2px;top:240.1px;font-size:12.6px;transform:scaleX(0.969);">0 сек.</span><span class="t" style="left:744.5px;top:240.1px;font-size:12.6px;transform:scaleX(0.915);">May 14 0...</span><svg class="a" style="left:164px;top:256px" width="17" height="17"><use href="#win"/></svg><span class="t" style="left:183.0px;top:258.1px;font-size:12.6px;transform:scaleX(0.898);">OutpostProInstall_ru.exe</span><svg class="a" style="left:321px;top:257.5px" width="18" height="14" viewBox="0 0 18 14"><use href="#qfold"/></svg><span style="white-space:pre"><span class="t" style="left:411.7px;top:258.1px;font-size:12.6px;transform:scaleX(0.922);white-space:pre;">21,40  МБ</span></span><span class="t" style="left:492.1px;top:258.1px;font-size:12.6px;transform:scaleX(0.906);">37,04%</span><span class="t" style="left:562.2px;top:258.1px;font-size:12.6px;transform:scaleX(0.933);">21 мин. 47...</span><span class="t" style="left:744.5px;top:258.1px;font-size:12.6px;transform:scaleX(0.915);">May 14 0...</span><svg class="a" style="left:164px;top:274px" width="17" height="17"><use href="#htm"/></svg><span class="t" style="left:183.0px;top:276.1px;font-size:12.6px;transform:scaleX(0.921);">eeepc_xp_2.htm</span><span class="t" style="left:492.1px;top:276.1px;font-size:12.6px;transform:scaleX(0.995);">Готово</span><span class="t" style="left:744.5px;top:276.1px;font-size:12.6px;transform:scaleX(0.915);">May 14 0...</span><svg class="a" style="left:164px;top:292px" width="17" height="17"><use href="#tib"/></svg><span class="t" style="left:183.0px;top:294.1px;font-size:12.6px;transform:scaleX(0.928);">eeepc_xp_2.tib</span><svg class="a" style="left:321px;top:293.5px" width="18" height="14" viewBox="0 0 18 14"><use href="#qfold"/></svg><span style="white-space:pre"><span class="t" style="left:411.7px;top:294.1px;font-size:12.6px;transform:scaleX(0.923);white-space:pre;">701,04  МБ</span></span><span class="t" style="left:492.1px;top:294.1px;font-size:12.6px;transform:scaleX(0.906);">25,91%</span><span class="t" style="left:562.2px;top:294.1px;font-size:12.6px;transform:scaleX(0.933);">13 мин. 16...</span><span class="t" style="left:642.5px;top:294.1px;font-size:12.6px;transform:scaleX(0.985);white-space:pre;">582,58  КБ/сек</span><span class="t" style="left:744.5px;top:294.1px;font-size:12.6px;transform:scaleX(0.915);">May 14 0...</span><div class="a" style="left:1639px;top:1011px;width:50px;height:50px;background:#c6e6fa;border:2px solid #e2ecf0"></div>
<div class="a" style="left:609px;top:410px;width:573px;height:227px;background:linear-gradient(to right,#5e5e5e 0,#333 3px,#2c2c2c 4px,#2c2c2c 568px,#3a3a3a 570px,#555 573px);border-radius:7px 7px 0 0"></div><div class="a" style="left:609px;top:632px;width:573px;height:5px;background:linear-gradient(#2a2a2a,#3c3c3c)"></div><div class="a" style="left:609px;top:410px;width:573px;height:31px;border-radius:7px 7px 0 0;box-shadow:inset 1px 0 0 #5c5c5c,inset -1px 0 0 #5c5c5c;background:linear-gradient(#707070 0,#747474 3%,#9c9ca0 6.5%,#8c8c90 16%,#727276 31%,#5a5a5c 46%,#242426 48%,#1f1f21 100%)"></div><div class="a" style="left:613px;top:440px;width:565px;height:193px;background:#e3e3e3;border:1px solid #111;border-bottom-color:#222"></div><svg class="a" style="left:614px;top:415px" width="20" height="20" viewBox="614 415 20 20"><path d="M615.4 417.8 L632.2 425.2 L616.8 433.8 L618 425.7Z" fill="#12e612"/><path d="M618 426 L632.2 425.2 L616.8 433.8Z" fill="#041a04"/></svg><span class="t" style="left:637.0px;top:419.0px;font-size:13px;transform:scaleX(1.018);font-weight:bold;color:#f0f0f0;text-shadow:0 0 2px #000;">25% eeepc_xp.tib</span><div class="a" style="left:1051px;top:419px;width:25px;height:14px;border:1px solid #777;border-radius:2px;background:linear-gradient(#7a7a7a 0,#5c5c5c 45%,#2c2c2c 50%,#3a3a3a 100%);box-shadow:0 0 0 1px #111"></div><div class="a" style="left:1084px;top:419px;width:28px;height:14px;border:1px solid #777;border-radius:2px;background:linear-gradient(#7a7a7a 0,#5c5c5c 45%,#2c2c2c 50%,#3a3a3a 100%);box-shadow:0 0 0 1px #111;border-radius:2px 0 0 2px"></div><div class="a" style="left:1112px;top:419px;width:27px;height:14px;border:1px solid #777;border-radius:2px;background:linear-gradient(#7a7a7a 0,#5c5c5c 45%,#2c2c2c 50%,#3a3a3a 100%);box-shadow:0 0 0 1px #111;border-radius:0;opacity:.75"></div><div class="a" style="left:1139px;top:419px;width:33px;height:14px;border:1px solid #8a4040;border-radius:0 2px 2px 0;background:linear-gradient(#e06a6a 0,#c83030 45%,#a00808 50%,#c01818 100%);box-shadow:0 0 0 1px #111"></div><svg class="a" style="left:1050px;top:418px" width="125" height="18" viewBox="1050 418 125 18"><rect x="1059" y="427" width="8" height="2" fill="#f0f0f0"/><path d="M1064 426.5 L1072 430.5 L1064.5 434 Z" fill="#18c818"/><rect x="1092.5" y="427" width="9.5" height="2.4" fill="#fff"/><rect x="1120.5" y="422.5" width="8" height="6" fill="none" stroke="#555" stroke-width="1.4"/><path d="M1151.5 422.5 L1159 429.5 M1159 422.5 L1151.5 429.5" stroke="#fff" stroke-width="2"/></svg><span class="t" style="left:636.1px;top:448.7px;font-size:12.3px;transform:scaleX(0.967);">http://02.dl2sb-narod.yandex.ru/disk/170143000/1042403330/eeepc_xp.tib</span><span class="t" style="left:636.1px;top:465.7px;font-size:12.3px;transform:scaleX(0.932);">Статус:</span><span class="t" style="left:710.2px;top:465.7px;font-size:12.3px;transform:scaleX(0.947);color:#1414d8;">Прием данных...</span><span class="t" style="left:636.1px;top:487.7px;font-size:12.3px;transform:scaleX(0.959);">Размер файла</span><span class="t" style="left:745.0px;top:487.7px;font-size:12.3px;transform:scaleX(0.931);white-space:pre;">701,043  МБ</span><span class="t" style="left:636.1px;top:504.7px;font-size:12.3px;transform:scaleX(0.983);">Загружено</span><span class="t" style="left:745.0px;top:504.7px;font-size:12.3px;transform:scaleX(0.923);white-space:pre;">181,784  МБ  ( 25,93 % )</span><span class="t" style="left:636.1px;top:521.7px;font-size:12.3px;transform:scaleX(0.977);">Скорость</span><span class="t" style="left:745.0px;top:521.7px;font-size:12.3px;transform:scaleX(1.002);white-space:pre;">582,587  КБ/сек</span><span class="t" style="left:636.1px;top:539.7px;font-size:12.3px;transform:scaleX(0.968);">Осталось</span><span class="t" style="left:745.0px;top:539.7px;font-size:12.3px;transform:scaleX(0.969);">13 мин. 16 сек.</span><span class="t" style="left:636.1px;top:556.7px;font-size:12.3px;transform:scaleX(0.985);">Поддержка докачки</span><span class="t" style="left:777.5px;top:556.7px;font-size:12.3px;transform:scaleX(1.094);">Да</span><div class="a" style="left:625px;top:579px;width:541px;height:16px;border-top:1px solid #b4b4b4;border-left:1px solid #c8c8c8;border-right:1px solid #dcdcdc;border-bottom:1px solid #e8e8e8;background:linear-gradient(#ececec 0,#fbfbfb 30%,#f6f6f6 60%,#e4e4e4 100%)"></div><div class="a" style="left:627.50px;top:580.3px;width:5.4px;height:13.5px;border-radius:1.2px;background:linear-gradient(to right,rgba(240,120,10,.35),rgba(255,200,130,.25) 50%,rgba(240,120,10,.35)),linear-gradient(#ffe2b4 0,#fbb860 22%,#f08210 50%,#ee7c08 60%,#fdb060 100%)"></div><div class="a" style="left:635.07px;top:580.3px;width:5.4px;height:13.5px;border-radius:1.2px;background:linear-gradient(to right,rgba(240,120,10,.35),rgba(255,200,130,.25) 50%,rgba(240,120,10,.35)),linear-gradient(#ffe2b4 0,#fbb860 22%,#f08210 50%,#ee7c08 60%,#fdb060 100%)"></div><div class="a" style="left:642.64px;top:580.3px;width:5.4px;height:13.5px;border-radius:1.2px;background:linear-gradient(to right,rgba(240,120,10,.35),rgba(255,200,130,.25) 50%,rgba(240,120,10,.35)),linear-gradient(#ffe2b4 0,#fbb860 22%,#f08210 50%,#ee7c08 60%,#fdb060 100%)"></div><div class="a" style="left:650.21px;top:580.3px;width:5.4px;height:13.5px;border-radius:1.2px;background:linear-gradient(to right,rgba(240,120,10,.35),rgba(255,200,130,.25) 50%,rgba(240,120,10,.35)),linear-gradient(#ffe2b4 0,#fbb860 22%,#f08210 50%,#ee7c08 60%,#fdb060 100%)"></div><div class="a" style="left:657.78px;top:580.3px;width:5.4px;height:13.5px;border-radius:1.2px;background:linear-gradient(to right,rgba(240,120,10,.35),rgba(255,200,130,.25) 50%,rgba(240,120,10,.35)),linear-gradient(#ffe2b4 0,#fbb860 22%,#f08210 50%,#ee7c08 60%,#fdb060 100%)"></div><div class="a" style="left:665.35px;top:580.3px;width:5.4px;height:13.5px;border-radius:1.2px;background:linear-gradient(to right,rgba(240,120,10,.35),rgba(255,200,130,.25) 50%,rgba(240,120,10,.35)),linear-gradient(#ffe2b4 0,#fbb860 22%,#f08210 50%,#ee7c08 60%,#fdb060 100%)"></div><div class="a" style="left:672.92px;top:580.3px;width:5.4px;height:13.5px;border-radius:1.2px;background:linear-gradient(to right,rgba(240,120,10,.35),rgba(255,200,130,.25) 50%,rgba(240,120,10,.35)),linear-gradient(#ffe2b4 0,#fbb860 22%,#f08210 50%,#ee7c08 60%,#fdb060 100%)"></div><div class="a" style="left:680.49px;top:580.3px;width:5.4px;height:13.5px;border-radius:1.2px;background:linear-gradient(to right,rgba(240,120,10,.35),rgba(255,200,130,.25) 50%,rgba(240,120,10,.35)),linear-gradient(#ffe2b4 0,#fbb860 22%,#f08210 50%,#ee7c08 60%,#fdb060 100%)"></div><div class="a" style="left:688.06px;top:580.3px;width:5.4px;height:13.5px;border-radius:1.2px;background:linear-gradient(to right,rgba(240,120,10,.35),rgba(255,200,130,.25) 50%,rgba(240,120,10,.35)),linear-gradient(#ffe2b4 0,#fbb860 22%,#f08210 50%,#ee7c08 60%,#fdb060 100%)"></div><div class="a" style="left:695.63px;top:580.3px;width:5.4px;height:13.5px;border-radius:1.2px;background:linear-gradient(to right,rgba(240,120,10,.35),rgba(255,200,130,.25) 50%,rgba(240,120,10,.35)),linear-gradient(#ffe2b4 0,#fbb860 22%,#f08210 50%,#ee7c08 60%,#fdb060 100%)"></div><div class="a" style="left:703.20px;top:580.3px;width:5.4px;height:13.5px;border-radius:1.2px;background:linear-gradient(to right,rgba(240,120,10,.35),rgba(255,200,130,.25) 50%,rgba(240,120,10,.35)),linear-gradient(#ffe2b4 0,#fbb860 22%,#f08210 50%,#ee7c08 60%,#fdb060 100%)"></div><div class="a" style="left:710.77px;top:580.3px;width:5.4px;height:13.5px;border-radius:1.2px;background:linear-gradient(to right,rgba(240,120,10,.35),rgba(255,200,130,.25) 50%,rgba(240,120,10,.35)),linear-gradient(#ffe2b4 0,#fbb860 22%,#f08210 50%,#ee7c08 60%,#fdb060 100%)"></div><div class="a" style="left:718.34px;top:580.3px;width:5.4px;height:13.5px;border-radius:1.2px;background:linear-gradient(to right,rgba(240,120,10,.35),rgba(255,200,130,.25) 50%,rgba(240,120,10,.35)),linear-gradient(#ffe2b4 0,#fbb860 22%,#f08210 50%,#ee7c08 60%,#fdb060 100%)"></div><div class="a" style="left:725.91px;top:580.3px;width:5.4px;height:13.5px;border-radius:1.2px;background:linear-gradient(to right,rgba(240,120,10,.35),rgba(255,200,130,.25) 50%,rgba(240,120,10,.35)),linear-gradient(#ffe2b4 0,#fbb860 22%,#f08210 50%,#ee7c08 60%,#fdb060 100%)"></div><div class="a" style="left:733.48px;top:580.3px;width:5.4px;height:13.5px;border-radius:1.2px;background:linear-gradient(to right,rgba(240,120,10,.35),rgba(255,200,130,.25) 50%,rgba(240,120,10,.35)),linear-gradient(#ffe2b4 0,#fbb860 22%,#f08210 50%,#ee7c08 60%,#fdb060 100%)"></div><div class="a" style="left:741.05px;top:580.3px;width:5.4px;height:13.5px;border-radius:1.2px;background:linear-gradient(to right,rgba(240,120,10,.35),rgba(255,200,130,.25) 50%,rgba(240,120,10,.35)),linear-gradient(#ffe2b4 0,#fbb860 22%,#f08210 50%,#ee7c08 60%,#fdb060 100%)"></div><div class="a" style="left:748.62px;top:580.3px;width:5.4px;height:13.5px;border-radius:1.2px;background:linear-gradient(to right,rgba(240,120,10,.35),rgba(255,200,130,.25) 50%,rgba(240,120,10,.35)),linear-gradient(#ffe2b4 0,#fbb860 22%,#f08210 50%,#ee7c08 60%,#fdb060 100%)"></div><div class="a" style="left:756.19px;top:580.3px;width:5.4px;height:13.5px;border-radius:1.2px;background:linear-gradient(to right,rgba(240,120,10,.35),rgba(255,200,130,.25) 50%,rgba(240,120,10,.35)),linear-gradient(#ffe2b4 0,#fbb860 22%,#f08210 50%,#ee7c08 60%,#fdb060 100%)"></div><div class="a" style="left:763.76px;top:580.3px;width:5.4px;height:13.5px;border-radius:1.2px;background:linear-gradient(to right,rgba(240,120,10,.35),rgba(255,200,130,.25) 50%,rgba(240,120,10,.35)),linear-gradient(#ffe2b4 0,#fbb860 22%,#f08210 50%,#ee7c08 60%,#fdb060 100%)"></div><div class="a" style="left:640px;top:605px;width:120px;height:23px;border:1px solid #f0901c;border-radius:2px;box-shadow:0 0 2px 1px rgba(250,150,40,.7),inset 0 0 0 1px #fff4e4;background:linear-gradient(#fbfbfb 0,#eeeeee 48%,#dadada 52%,#e6e6e6 100%)"></div><div class="a" style="left:947px;top:605px;width:88px;height:23px;border:1px solid #a8a8a8;border-radius:2px;box-shadow:inset 0 0 0 1px #fdfdfd;background:linear-gradient(#fbfbfb 0,#eeeeee 48%,#dadada 52%,#e6e6e6 100%)"></div><div class="a" style="left:1066px;top:605px;width:78px;height:23px;border:1px solid #a8a8a8;border-radius:2px;box-shadow:inset 0 0 0 1px #fdfdfd;background:linear-gradient(#fbfbfb 0,#eeeeee 48%,#dadada 52%,#e6e6e6 100%)"></div><span class="t" style="left:644.9px;top:609.7px;font-size:12.3px;transform:scaleX(0.969);">Показать детали &gt;&gt;</span><span class="t" style="left:972.7px;top:609.7px;font-size:12.3px;transform:scaleX(1.018);">Пауза</span><span class="t" style="left:1083.5px;top:609.7px;font-size:12.3px;transform:scaleX(0.984);">Отмена</span>
</div>
</body>
</html>
